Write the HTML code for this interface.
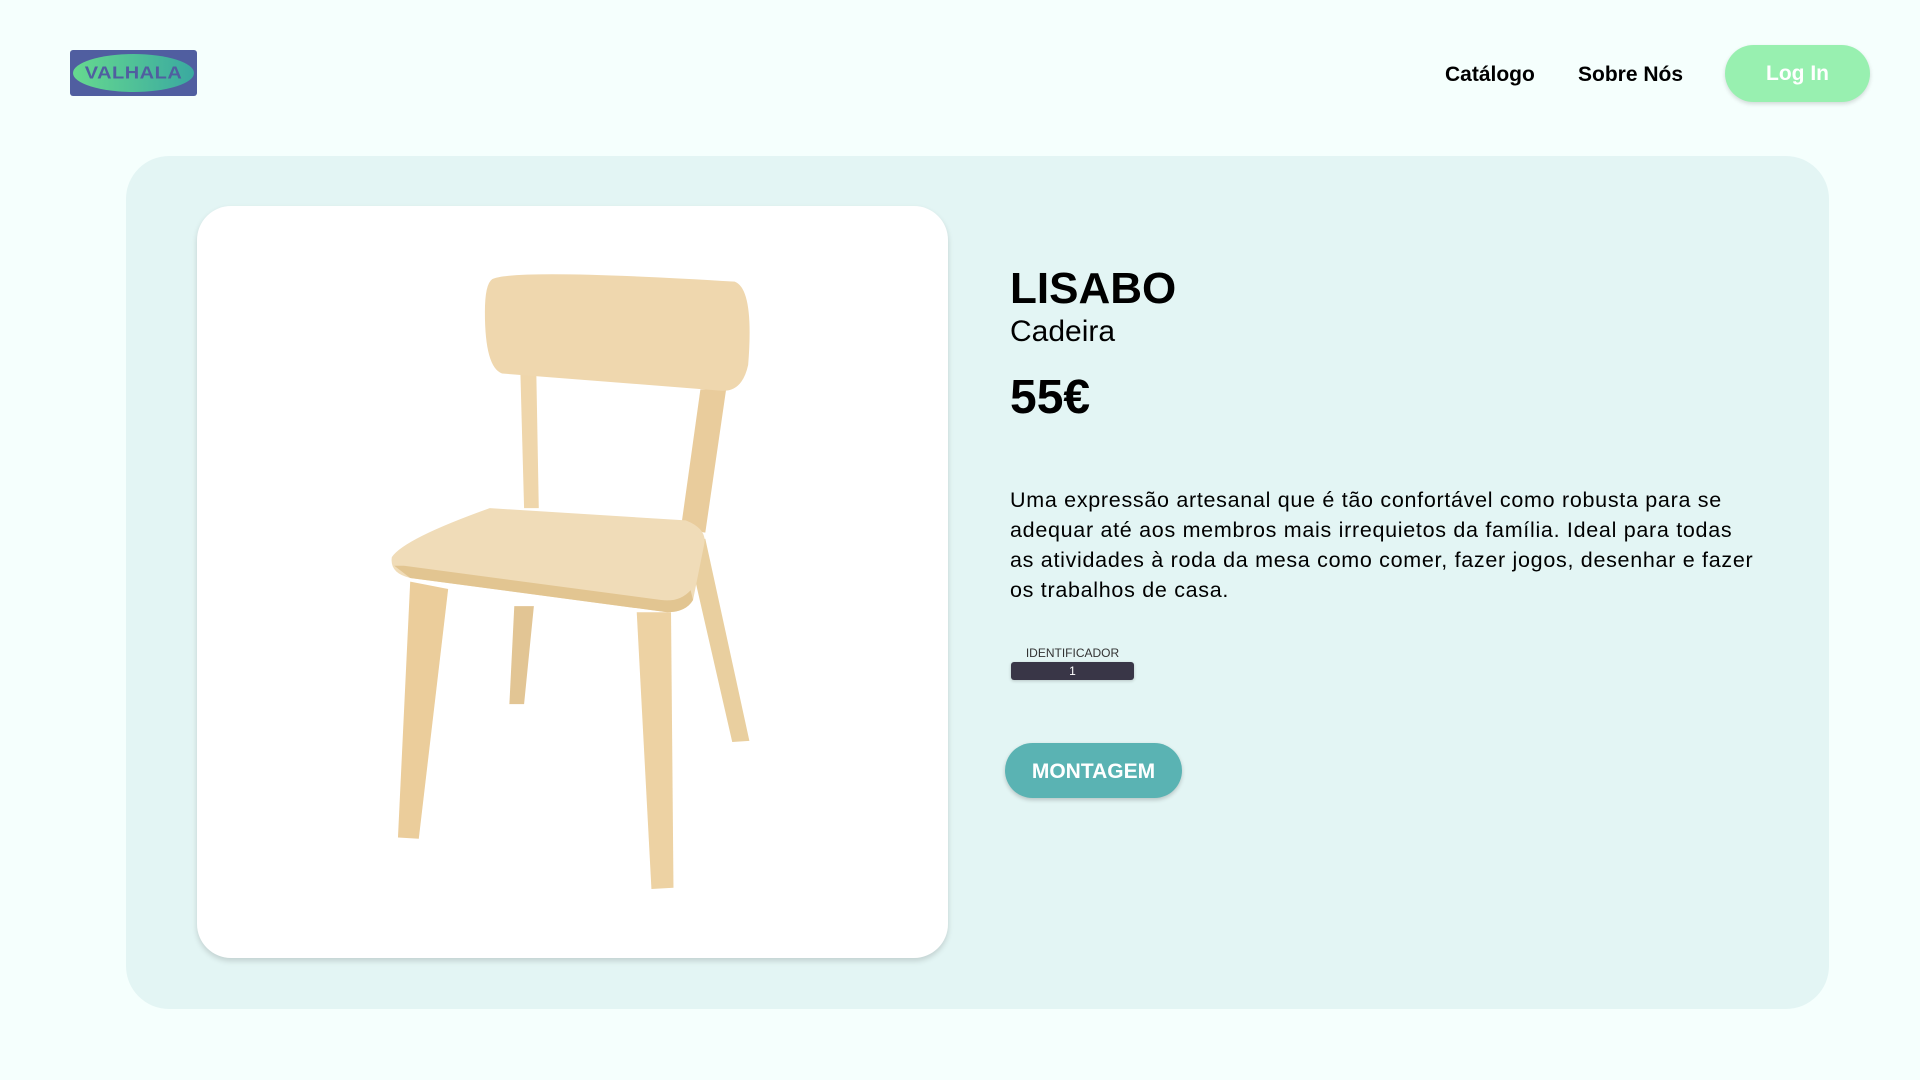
<!DOCTYPE html>
<html><head><meta charset="utf-8"><style>
*{margin:0;padding:0;box-sizing:border-box}
body{width:1920px;height:1080px;background:#f5fffd;font-family:"Liberation Sans",sans-serif;position:relative;overflow:hidden;color:#000}
.abs{position:absolute}
.logo{left:70px;top:50px;width:127px;height:46px;background:#505ea0;border-radius:3px}
.logo .ov{position:absolute;left:3px;top:4px;width:121px;height:38px;border-radius:50%;background:linear-gradient(90deg,#66d98f,#3aa9a0)}
.logo span{position:absolute;left:0;right:0;top:12px;text-align:center;font-weight:900;font-size:20px;color:#505ea0;letter-spacing:0.5px;transform:scaleY(0.9)}
.nav{font-weight:bold;font-size:21px;top:63px}
.login{left:1725px;top:45px;width:145px;height:57px;border-radius:29px;background:#98f0b0;color:#fff;font-weight:bold;font-size:21px;text-align:center;line-height:57px;box-shadow:0 2px 4px rgba(0,0,0,.15)}
.card{left:126px;top:156px;width:1703px;height:853px;background:#e3f5f4;border-radius:43px}
.img{left:197px;top:206px;width:751px;height:752px;background:#fff;border-radius:34px;box-shadow:0 3px 6px rgba(0,0,0,.15)}
.h1{left:1010px;top:264px;font-size:44px;font-weight:bold}
.h2{left:1010px;top:315px;font-size:30px}
.price{left:1010px;top:370px;font-size:48px;font-weight:bold}
.desc{left:1010px;top:485px;width:750px;font-size:21.5px;line-height:30px;letter-spacing:0.7px}
.idl{left:1011px;top:646px;width:123px;text-align:center;font-size:12px;color:#333}
.idb{left:1011px;top:662px;width:123px;height:18px;background:#393647;border-radius:3px;color:#fff;font-size:12px;text-align:center;line-height:18px;box-shadow:0 1px 3px rgba(0,0,0,.2)}
.mont{left:1005px;top:743px;width:177px;height:55px;border-radius:28px;background:#5ab3b3;color:#fff;font-weight:bold;font-size:21px;text-align:center;line-height:57px;box-shadow:0 2px 4px rgba(0,0,0,.2)}
</style></head><body>
<div class="abs logo"><div class="ov"></div><span>VALHALA</span></div>
<div class="abs nav" style="left:1445px">Catálogo</div>
<div class="abs nav" style="left:1578px">Sobre Nós</div>
<div class="abs login">Log In</div>
<div class="abs card"></div>
<div class="abs img"></div>
<svg class="abs" style="left:0;top:0" width="1920" height="1080" viewBox="0 0 1568 882">
<polygon points="420,495 436,495 428,575 416,575" fill="#e2c594"/>
<polygon points="560,440 576,440 612,605 598,606" fill="#e9cf9f"/>
<polygon points="425,305 438,305 440,415 428,415" fill="#efd6ab"/>
<polygon points="572,318 593,318 576,435 556,432" fill="#e9cc9c"/>
<path d="M402,228 Q420,219 600,230 Q616,236 611,298 Q606,321 588,319 L410,305 Q396,300 396,255 Q396,232 402,228Z" fill="#efd7ae"/>
<path d="M320,455 Q330,440 400,415 L560,425 Q578,432 575,445 L566,490 Q560,500 545,500 L335,472 Q318,468 320,455Z" fill="#f0dcb8"/>
<path d="M322,462 L335,472 L545,500 Q560,500 566,490 L564,482 Q555,492 540,490 L330,462Z" fill="#e2c591"/>
<polygon points="335,475 366,481 342,685 325,684" fill="#ebcd9b"/>
<polygon points="520,500 548,500 550,725 532,726" fill="#edd2a3"/>
</svg>
<div class="abs h1">LISABO</div>
<div class="abs h2">Cadeira</div>
<div class="abs price">55€</div>
<div class="abs desc">Uma expressão artesanal que é tão confortável como robusta para se adequar até aos membros mais irrequietos da família. Ideal para todas as atividades à roda da mesa como comer, fazer jogos, desenhar e fazer os trabalhos de casa.</div>
<div class="abs idl">IDENTIFICADOR</div>
<div class="abs idb">1</div>
<div class="abs mont">MONTAGEM</div>
</body></html>
